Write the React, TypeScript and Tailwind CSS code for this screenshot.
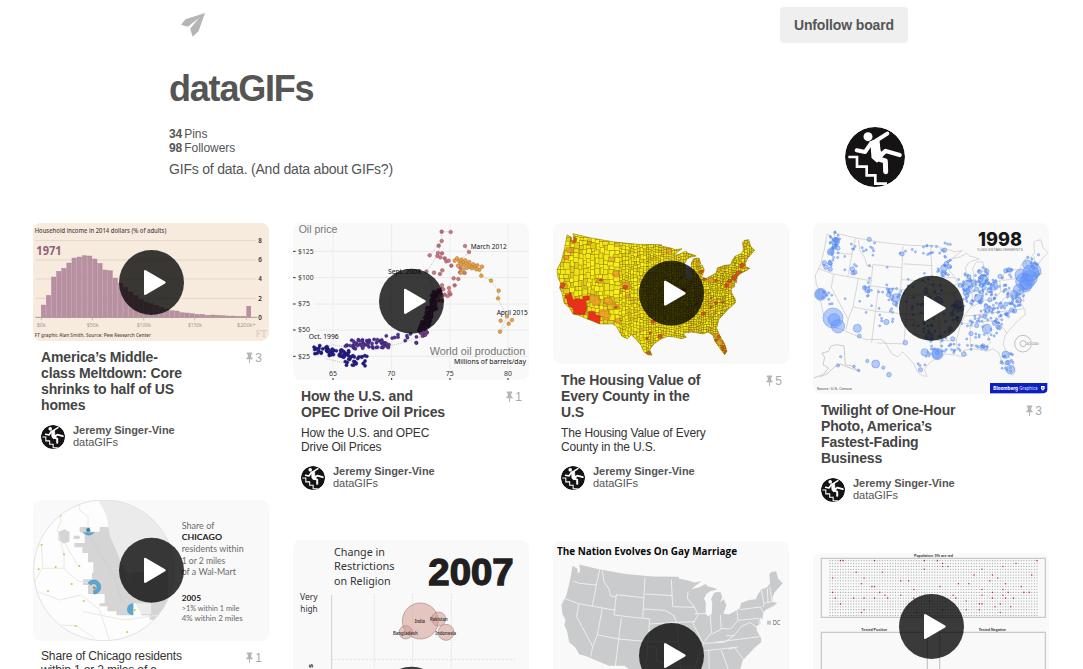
import React from "react";

const SANS = "'Liberation Sans', Arial, sans-serif";
const NOTO = "'Noto Sans', sans-serif";
const LATO = "Lato, sans-serif";

function makeRandom(seed: number) {
  let s = seed;
  return () => {
    s = (s * 1664525 + 1013904223) % 4294967296;
    return s / 4294967296;
  };
}

type LabelProps = {
  x: number;
  y: number;
  size: number;
  children: string;
  width?: number;
  weight?: number;
  fill?: string;
  font?: string;
};

function Label({ x, y, size, children, width, weight = 400, fill = "#333", font = NOTO }: LabelProps) {
  return (
    <text
      x={x}
      y={y}
      fontSize={size}
      fontWeight={weight}
      fill={fill}
      fontFamily={font}
      textLength={width}
      lengthAdjust="spacingAndGlyphs"
    >
      {children}
    </text>
  );
}

function Play({ cy }: { cy: number }) {
  return (
    <g transform={`translate(370.5 ${cy})`}>
      <circle r="97.5" fill="#000" fillOpacity="0.77" />
      <path d="M-19 -34 L39 0 L-19 34 Z" fill="#fff" stroke="#fff" strokeWidth="7" strokeLinejoin="round" />
    </g>
  );
}

function Picture({ height, top = 15, children }: { height: number; top?: number; children: React.ReactNode }) {
  return (
    <div className="w-[236px] overflow-hidden rounded-lg bg-[#f9f9f9]">
      <svg className="block" width="236" height={height} viewBox={`15 ${top} 708 ${height * 3}`}>
        {children}
      </svg>
    </div>
  );
}

function Avatar({ size }: { size: number }) {
  return (
    <svg className="block shrink-0 rounded-full" width={size} height={size} viewBox="0 0 180 180">
      <circle cx="90" cy="90" r="90" fill="#151314" />
      <g fill="none" stroke="#fff" strokeLinejoin="round" strokeLinecap="round">
        <path d="M10 90 H36 V119 H65 V145 H91 V170 H126" strokeWidth="8" strokeLinejoin="miter" strokeLinecap="butt" />
        <path d="M127 20 L92 42 L78 49 L60 75 L35 70" strokeWidth="12" />
        <path d="M95 95 L122 72 L164 84" strokeWidth="13" />
        <path d="M95 94 L121 102 L122 134" strokeWidth="15" />
      </g>
      <path d="M76 45 L101 39 L104 70 L113 86 L96 104 L82 92 L80 65 Z" fill="#fff" stroke="#fff" strokeWidth="5" strokeLinejoin="round" />
      <circle cx="69" cy="29" r="13.5" fill="#fff" />
    </svg>
  );
}

const USA =
  "M57 50 L70 58 L71 72 L77 64 L75 47 L130 60 L200 72 L270 79 L340 80 L343 85 L365 89 L382 95 L402 92 L386 104 L375 113 L396 108 L413 99 L420 106 L437 110 L445 114 L427 118 L416 125 L409 138 L414 150 L413 178 L420 186 L430 178 L431 150 L428 138 L437 122 L453 120 L458 135 L452 147 L462 140 L469 156 L461 178 L475 181 L490 173 L505 164 L508 150 L530 142 L548 140 L553 127 L562 114 L578 108 L586 98 L584 72 L590 67 L602 65 L608 85 L620 97 L610 108 L598 122 L592 136 L593 146 L605 151 L595 158 L575 168 L568 176 L565 195 L559 188 L560 206 L549 212 L551 225 L562 244 L562 255 L545 269 L530 285 L512 305 L506 330 L514 350 L530 378 L537 400 L530 410 L515 390 L500 368 L495 352 L480 342 L465 348 L450 345 L430 342 L405 346 L415 358 L400 362 L385 358 L360 355 L340 362 L318 378 L305 395 L312 412 L300 410 L288 402 L278 380 L265 365 L250 350 L238 362 L222 355 L205 325 L195 318 L155 318 L120 304 L92 292 L75 288 L65 270 L48 255 L42 225 L35 210 L38 195 L30 180 L27 155 L40 130 L50 90 Z";

const STATES =
  "M76 138 L95 145 L145 150 M155 105 L145 150 L133 214 M48 190 L92 206 L203 226 M163 108 L168 140 L182 160 L188 183 L205 186 M205 179 L287 188 M205 179 L198 240 L282 250 M291 127 L284 250 L305 252 L304 268 M292 177 L374 182 M287 222 L350 226 L376 240 L386 262 L304 267 M370 133 L374 215 L440 217 M163 220 L148 300 L134 335 M92 208 L86 245 L134 335 L128 365 M150 300 L212 312 L300 320 L390 320 M220 248 L201 402 M304 268 L300 320 L293 405 L216 402 M386 262 L440 260 M420 170 L418 190 L440 217 L450 240 L435 265 L457 310 L467 325 L455 350 L443 395 L445 425 M386 262 L392 320 L397 395 L440 396 M300 335 L325 337 L325 377 L360 388 L397 395 L400 430 M440 236 L475 236 M487 238 L490 292 L470 320 M517 240 L520 282 L490 298 M567 225 L570 256 L548 282 L520 280 M570 256 L632 250 L636 285 L606 262 L580 275 L558 302 L535 302 M575 224 L637 216 L650 238 M500 322 L635 305 M467 325 L530 322 L558 302 M465 348 L570 336 M482 348 L484 415 M520 346 L540 400 L530 412 L484 407 M540 342 L560 338 L588 375 M640 165 L648 206 L645 216 M658 160 L660 203 M665 156 L672 198 M648 205 L680 198";

function IncomeChart() {
  const bars = [37, 66, 121, 138, 147, 163, 178, 181, 185, 184, 175, 162, 142, 140, 118, 103, 90, 76, 65, 53, 46, 41, 36, 29, 25, 20, 19, 14, 13, 11, 9, 9, 6, 7, 6, 5, 4, 4, 3, 3];
  return (
    <Picture height={118}>
      <rect x="15" y="15" width="708" height="354" fill="#f7ebdd" />
      {[68, 126, 183, 241].map((y) => (
        <path key={y} d={`M22 ${y} H684`} stroke="#e3d7cd" strokeWidth="3" />
      ))}
      {bars.map((h, i) => (
        <rect key={i} x={39.5 + i * 15.4} y={298 - h} width="13.5" height={h} fill="#b98fa2" stroke="#a47a90" strokeWidth="1" />
      ))}
      <rect x="655" y="264" width="14" height="34" fill="#b98fa2" />
      <path d="M22 298 H688" stroke="#a99b96" strokeWidth="3" />
      {[40, 193, 347, 500, 655].map((x) => (
        <path key={x} d={`M${x} 299 v8`} stroke="#b9aaa3" strokeWidth="2" />
      ))}
      <Label x={20} y={44} size={19} width={395} weight={500} fill="#4c4644">Household income in 2014 dollars (% of adults)</Label>
      <Label x={25} y={111} size={38} width={76} weight={700} fill="#925f80">1971</Label>
      {["8", "6", "4", "2", "0"].map((t, i) => (
        <Label key={t} x={691} y={75 + i * 57.5} size={19} weight={600}>{t}</Label>
      ))}
      <Label x={26} y={326} size={17} width={28} fill="#a19793">$0k</Label>
      <Label x={176} y={326} size={17} width={36} fill="#a19793">$50k</Label>
      <Label x={326} y={326} size={17} width={43} fill="#a19793">$100k</Label>
      <Label x={480} y={326} size={17} width={42} fill="#a19793">$150k</Label>
      <Label x={627} y={326} size={17} width={56} fill="#a19793">$200k+</Label>
      <Label x={20} y={357} size={16} width={349} weight={500} fill="#4c4644">FT graphic Alan Smith, Source: Pew Research Center</Label>
      <Label x={683} y={358} size={29} width={34} fill="#d4c8bd" font="'Liberation Serif', serif">FT</Label>
      <Play cy={193.5} />
    </Picture>
  );
}

const OIL_LATE: [number, number][] = [
  [461, 41], [488, 42], [461, 69], [452, 83], [425, 112], [450, 105], [462, 106], [448, 114], [457, 118], [470, 121], [475, 130], [482, 128], [490, 143], [531, 84], [543, 102], [415, 161], [438, 164], [463, 157], [456, 168], [462, 202], [483, 210], [500, 202], [497, 181], [511, 183], [516, 163], [530, 165], [517, 150], [487, 229], [466, 214], [479, 234], [470, 230], [455, 234], [448, 243], [462, 248], [484, 222],
];
const OIL_GOLD: [number, number][] = [
  [500, 128], [507, 121], [514, 130], [520, 125], [526, 133], [532, 127], [538, 137], [544, 132], [550, 143], [556, 139], [562, 146], [568, 142], [574, 155], [582, 146], [565, 154], [552, 151], [543, 147], [536, 150], [528, 142], [518, 138], [510, 143], [525, 155], [519, 164], [580, 173], [609, 188], [632, 218], [630, 241], [657, 295], [638, 308], [636, 341], [662, 317], [672, 306],
];

function OilChart() {
  const r = makeRandom(27);
  const early: { x: number; y: number; c: string }[] = [];
  for (let i = 0; i < 20; i++) early.push({ x: 72 + r() * 62, y: 394 + r() * 16 - r() * 14 * (i % 3), c: "#171a82" });
  for (let i = 0; i < 34; i++) early.push({ x: 120 + r() * 75, y: 396 + r() * 22, c: "#1f1b86" });
  for (let i = 0; i < 24; i++) early.push({ x: 165 + r() * 80, y: 412 + r() * 36, c: "#211a88" });
  for (let i = 0; i < 56; i++) early.push({ x: 172 + r() * 132, y: 363 + r() * 30, c: i % 2 ? "#4b2a8b" : "#5c3691" });
  for (let i = 0; i < 14; i++) early.push({ x: 270 + r() * 120, y: 346 + r() * 30, c: "#54308c" });
  const middle: { x: number; y: number }[] = [];
  for (let i = 0; i < 110; i++) {
    const t = r();
    middle.push({ x: 388 + t * 50 + r() * 25, y: 345 - t * 125 + r() * 22 - 10 });
  }
  return (
    <Picture height={157}>
      {[100, 179, 258, 336, 415].map((y) => (
        <path key={y} d={`M80 ${y} H723`} stroke="#eaeaea" strokeWidth="3" />
      ))}
      {[135, 311, 486, 660].map((x) => (
        <g key={x}>
          <path d={`M${x} 15 V455`} stroke="#ededed" strokeWidth="3" />
          <path d={`M${x} 480 v6`} stroke="#222" strokeWidth="3" />
        </g>
      ))}
      <path d="M488 42 L461 41 L461 69 L448 114 L415 161 L465 280 M461 69 L425 112 M531 84 L543 102 L514 130 M574 155 L580 173 L609 188 L632 218 L630 241 L657 295 L636 341 L672 306 M72 400 L135 380 L180 390 M112 422 L170 435 L230 420 M260 395 L340 375 L415 352" fill="none" stroke="#aaa" strokeWidth="2" strokeDasharray="3 3" />
      {early.map((p, i) => (
        <circle key={i} cx={p.x} cy={p.y} r="5" fill={p.c} stroke="#281f62" strokeWidth="1" />
      ))}
      {middle.map((p, i) => (
        <circle key={i} cx={p.x} cy={p.y} r="5" fill="#7a3f86" stroke="#4c2856" strokeWidth="1.5" />
      ))}
      {OIL_LATE.map(([x, y], i) => (
        <circle key={i} cx={x} cy={y} r="5.5" fill={i % 3 ? "#c77b7f" : "#b66b84"} stroke="#94545e" strokeWidth="1.5" />
      ))}
      {OIL_GOLD.map(([x, y], i) => (
        <circle key={i} cx={x} cy={y} r="5.5" fill="#e5a347" stroke="#aa702f" strokeWidth="1.5" />
      ))}
      {[100, 179, 258, 336, 415].map((y, i) => (
        <g key={y}>
          <path d={`M15 ${y} h8`} stroke="#333" strokeWidth="3" />
          <Label x={30} y={y + 7} size={19} width={i < 2 ? 47 : 36}>{["$125", "$100", "$75", "$50", "$25"][i]}</Label>
        </g>
      ))}
      {["65", "70", "75", "80"].map((t, i) => (
        <Label key={t} x={123 + i * 175} y={473} size={19} width={24}>{t}</Label>
      ))}
      <Label x={32} y={46} size={34} width={116} fill="#777" font={SANS}>Oil price</Label>
      <Label x={548} y={92} size={19} width={108} fill="#111">March 2012</Label>
      <Label x={300} y={167} size={19} width={99} fill="#111">Sept. 2008</Label>
      <Label x={62} y={363} size={19} width={90} fill="#111">Oct. 1996</Label>
      <Label x={626} y={290} size={19} width={93} fill="#111">April 2015</Label>
      <Label x={425} y={410} size={34} width={287} fill="#777" font={SANS}>World oil production</Label>
      <Label x={498} y={438} size={20} width={216} fill="#111">Millions of barrels/day</Label>
      <Play cy={250} />
    </Picture>
  );
}

const ORANGE_AREAS: [number, number, number][] = [
  [64, 98, 9], [57, 120, 7], [125, 76, 6], [50, 205, 10], [155, 190, 8], [205, 170, 10], [235, 205, 12], [140, 250, 17], [170, 292, 17], [240, 235, 7], [205, 268, 9], [364, 100, 8], [452, 140, 8], [512, 155, 8], [590, 145, 9], [545, 200, 10], [490, 188, 8], [430, 342, 6], [510, 355, 9], [515, 375, 9], [210, 310, 8], [182, 252, 13],
];
const RED_AREAS: [number, number, number][] = [
  [78, 67, 9], [43, 203, 9], [58, 236, 7], [316, 312, 6], [337, 356, 7], [298, 361, 4], [308, 345, 4], [233, 208, 7], [159, 186, 4], [460, 162, 6], [470, 185, 5], [583, 143, 7], [572, 167, 9], [560, 180, 8], [545, 190, 6], [537, 203, 6], [467, 287, 6], [525, 253, 4], [505, 256, 5], [490, 268, 4], [529, 388, 8], [503, 368, 5], [514, 355, 5], [535, 402, 6], [410, 215, 5], [445, 260, 4], [302, 406, 6], [505, 188, 4], [205, 268, 4], [490, 240, 3], [400, 180, 4],
];

function HousingMap() {
  const r = makeRandom(91);
  const cells: { x: number; y: number; w: number; h: number; c: string }[] = [];
  const shades = ["#f5e716", "#f7e915", "#efe018", "#fbf01a", "#e3cb1c", "#ebb428"];
  let x = 24;
  while (x < 625) {
    const base = x < 215 ? 14 : x < 290 ? 9 : 7;
    const w = base * (0.75 + r() * 0.5);
    let y = 42;
    while (y < 415) {
      const h = base * (0.65 + r() * 0.8);
      cells.push({ x: x + (r() - 0.5) * base * 0.5, y, w: w * (0.9 + r() * 0.35), h, c: shades[Math.floor(r() * (x < 400 ? 5.3 : 6))] });
      y += h;
    }
    x += w;
  }
  return (
    <Picture height={141}>
      <defs>
        <clipPath id="housing-clip"><path d={USA} /></clipPath>
      </defs>
      <g clipPath="url(#housing-clip)">
        <rect x="15" y="15" width="640" height="410" fill="#dfce18" />
        {cells.map((c, i) => (
          <rect key={i} x={c.x} y={c.y} width={c.w} height={c.h} fill={c.c} stroke="#6b6208" strokeWidth={c.x < 215 ? 0.9 : c.x < 400 ? 0.85 : 1} />
        ))}
        {ORANGE_AREAS.map(([cx, cy, s], i) => (
          <path key={i} d={`M${cx - s} ${cy - s} h${s * 1.7} v${s * 0.7} h${s * 0.4} l-4 ${s} h${-s * 1.3} v${-s * 0.5} h${-s * 0.6} Z`} fill="#eb9829" stroke="#81540f" strokeWidth="1" fillOpacity="0.8" />
        ))}
        {RED_AREAS.map(([cx, cy, s], i) => (
          <path key={i} d={`M${cx - s} ${cy - s * 0.7} l${s} ${-s * 0.3} l${s} ${s * 0.4} l-2 ${s} l${-s * 0.8} ${s * 0.5} l${-s} ${-s * 0.4} Z`} fill="#d9411e" stroke="#7a2a0c" strokeWidth="1" fillOpacity="0.85" />
        ))}
        <path d="M55 236 L68 222 L76 246 L86 241 L105 245 L104 235 L123 234 L124 245 L113 249 L117 271 L110 290 L75 290 L77 274 L60 262 Z" fill="#e8301a" stroke="#8c3410" />
        <path d="M122 280 L139 280 L143 290 L157 294 L155 319 L120 304 Z" fill="#e8301a" stroke="#8c3410" />
      </g>
      <path d={USA} fill="none" stroke="#85761a" strokeWidth="1.5" />
      <path d="M418 124 L432 119 L428 140 L431 178 L421 185 L414 177 L415 148 Z" fill="#f9f9f9" />
      <path d="M417 148 L429 146 L431 178 L421 185 L414 177 Z" fill="#b9bdd8" />
      <Play cy={225.5} />
    </Picture>
  );
}

const PHOTO_CLUSTERS: [number, number, number, number, number][] = [
  [82, 70, 18, 30, 24], [70, 105, 25, 25, 10], [55, 140, 20, 18, 8], [135, 85, 10, 12, 4], [175, 85, 30, 22, 8], [130, 155, 20, 22, 5], [180, 205, 12, 30, 10], [260, 235, 22, 30, 17], [225, 215, 20, 20, 6], [410, 110, 45, 35, 18], [408, 155, 25, 18, 14], [475, 195, 30, 35, 26], [525, 180, 25, 32, 26], [560, 208, 45, 25, 26], [510, 235, 50, 30, 26], [485, 280, 60, 40, 24], [550, 285, 55, 40, 26], [530, 330, 55, 40, 30], [590, 265, 50, 35, 26], [620, 240, 30, 25, 22], [600, 170, 25, 18, 9], [390, 320, 50, 50, 26], [375, 395, 40, 25, 12], [445, 385, 55, 30, 18], [595, 430, 24, 35, 18], [60, 250, 25, 35, 9], [240, 295, 22, 30, 7], [345, 440, 20, 30, 4], [355, 95, 30, 20, 6], [350, 220, 55, 45, 14], [300, 110, 25, 25, 4], [510, 390, 30, 10, 9],
];
const PHOTO_BIG: [number, number, number][] = [
  [75, 300, 30], [78, 305, 18], [90, 325, 20], [38, 229, 15], [38, 229, 18], [148, 331, 12], [83, 70, 12], [68, 102, 10], [387, 408, 14], [388, 408, 17], [364, 355, 12], [350, 403, 11], [203, 438, 12], [178, 429, 5], [226, 449, 5], [243, 470, 7], [264, 239, 12], [178, 216, 8], [154, 354, 6], [133, 153, 7], [408, 150, 10], [478, 203, 16], [450, 260, 12], [525, 185, 14], [558, 205, 12], [593, 410, 11], [607, 455, 13], [235, 312, 8], [292, 374, 7], [467, 408, 7], [648, 190, 25], [665, 180, 23], [681, 158, 18], [653, 204, 18], [619, 231, 13], [640, 172, 19], [658, 140, 14], [668, 165, 24], [657, 192, 22], [632, 215, 16], [390, 250, 14], [537, 333, 14], [510, 240, 11],
];

function PhotoMap() {
  const r = makeRandom(13);
  const dots: { x: number; y: number; s: number }[] = [];
  PHOTO_CLUSTERS.forEach(([cx, cy, rx, ry, n]) => {
    for (let i = 0; i < n; i++) {
      const a = r() * Math.PI * 2;
      const d = Math.sqrt(r());
      dots.push({ x: cx + Math.cos(a) * d * rx, y: cy + Math.sin(a) * d * ry, s: r() > 0.85 ? 6.5 : 3.2 });
    }
  });
  for (let i = 0; i < 28; i++) dots.push({ x: 105 + r() * 250, y: 100 + r() * 230, s: 3 });
  for (let i = 0; i < 16; i++) dots.push({ x: 658 + r() * 40, y: 110 + r() * 70, s: 3.5 });
  return (
    <Picture height={171}>
      <path d={USA} transform="translate(-10 -11) scale(1.177 1.18)" fill="none" stroke="#c5c2c0" strokeWidth="1.6" />
      <path d={STATES} transform="translate(-20.5 -49) scale(1.051 1.0536)" fill="none" stroke="#c5c2c0" strokeWidth="1.8" />
      <path d="M18 480 L45 470 L62 450 L45 440 L50 418 L42 405 L62 400 L68 385 L85 380 L108 384 L112 440 L130 444 L155 460 L120 448 L98 438 L78 448 L60 465 L35 478" fill="none" stroke="#bdbab8" strokeWidth="2.2" />
      <g fill="#5f93fa" fillOpacity="0.45" stroke="#5585e8" strokeWidth="1.4">
        {dots.map((d, i) => (
          <circle key={i} cx={d.x} cy={d.y} r={d.s} />
        ))}
        {PHOTO_BIG.map(([x, y, s], i) => (
          <circle key={i} cx={x} cy={y} r={s} />
        ))}
        <circle cx="98" cy="416" r="3.5" />
        <circle cx="90" cy="442" r="5" />
        <circle cx="138" cy="445" r="4" />
        <circle cx="152" cy="457" r="4" />
      </g>
      <circle cx="645" cy="377" r="25" fill="none" stroke="#b5b5b5" strokeWidth="2.5" />
      <circle cx="645" cy="377" r="9" fill="none" stroke="#b5b5b5" strokeWidth="2.5" />
      <Label x={654} y={382} size={13} width={38} fill="#777" font={SANS}>10 100</Label>
      <Label x={510} y={83} size={58} width={132} weight={800} fill="#171717" font="Inter, sans-serif">1998</Label>
      <Label x={508} y={98} size={12} width={137} fill="#777" font={SANS}>9,066 ESTABLISHMENTS</Label>
      <Label x={26} y={516} size={12} width={106} fill="#444" font={SANS}>Source: U.S. Census</Label>
      <rect x="546" y="495" width="172" height="31" fill="#0d20be" />
      <Label x={556} y={516} size={16} width={74} weight={700} fill="#fff" font="Inter, sans-serif">Bloomberg</Label>
      <Label x={634} y={516} size={16} width={55} fill="#dfe2ff" font="Inter, sans-serif">Graphics</Label>
      <path d="M699 504 h11 v8 l-5.5 6 l-5.5 -6 Z" fill="#fff" />
      <path d="M704.5 508 v4" stroke="#0d20be" strokeWidth="3" />
      <Play cy={271} />
    </Picture>
  );
}

const STORES: [number, number][] = [
  [98, 62], [41, 149], [108, 178], [32, 223], [83, 216], [154, 213], [131, 267], [60, 289], [167, 318], [143, 393], [298, 411], [320, 345],
];

function ChicagoMap() {
  return (
    <Picture height={141}>
      <defs>
        <clipPath id="chicago-clip"><circle cx="228" cy="226" r="211" /></clipPath>
      </defs>
      <g clipPath="url(#chicago-clip)">
        <rect x="15" y="15" width="430" height="425" fill="#fdfdfd" />
        <path d="M209 15 L224 38 L235 62 L241 95 L247 125 L265 165 L280 205 L300 240 L320 320 L340 357 L385 365 L365 400 L440 400 V15 Z" fill="#ebebeb" />
        <path d="M92 110 L110 103 L125 111 L124 140 L108 146 L91 136 Z" fill="#d5d5d5" />
        <path d="M155 96 L186 96 L186 110 L215 110 L215 96 L241 96 L247 125 L265 165 L280 205 L300 240 L318 295 L318 361 L265 361 L265 349 L238 349 L238 334 L215 334 L215 325 L230 325 L230 297 L180 297 L180 270 L165 270 L165 253 L192 253 L192 233 L196 233 L196 202 L180 202 L180 174 L163 174 L163 157 L139 157 L139 144 L170 144 L170 118 L155 110 Z M137 122 H155 V132 H137 Z M339 357 H370 V325 H420 L400 391 H376 V374 H365 V361 H339 Z" fill="#d5d5d5" />
        <path d="M300 235 L318 295 L318 325 H370 V357 L420 340 V220 Z" fill="#d5d5d5" />
        <path d="M20 130 L40 155 L45 215 L20 260 M43 220 L105 220 L150 258 L190 265 M30 290 L95 315 L160 300 L215 345 L245 437 M60 15 L100 75 L88 105 L108 178 L108 222 M155 15 V45 L180 65 V100 M165 350 L290 375 L430 355 M90 390 L145 392 L200 430 M110 145 L152 215" fill="none" stroke="#e8e8e8" strokeWidth="3" />
        <path d="M178 115 L260 245 L282 320" stroke="#cbcbcb" fill="none" strokeWidth="2" />
        <path d="M165 112 L200 112 A20 18 0 0 1 165 112 Z" fill="#58a6d3" />
        <path d="M174 101 L184 98 L188 109 L177 111 Z" fill="#427d96" />
        <path d="M180 264 A21 21 0 1 1 197 297 V286 A10 10 0 1 0 189 270 Z" fill="#58a6d3" stroke="#4189b4" strokeWidth="1.5" />
        <circle cx="199" cy="278" r="4.5" fill="#9b9353" />
        <path d="M315 325 V361 A18 18 0 0 1 315 325 Z" fill="#58a6d3" />
        {STORES.map(([x, y], i) => (
          <circle key={i} cx={x} cy={y} r="3" fill="#dfbd42" />
        ))}
      </g>
      <circle cx="228" cy="226" r="211" fill="none" stroke="#e2e2e2" strokeWidth="3" />
      <Label x={461} y={101} size={26} width={98} fill="#6b6b6b" font={LATO}>Share of</Label>
      <Label x={461} y={136} size={24} width={121} weight={700} fill="#222" font={LATO}>CHICAGO</Label>
      <Label x={461} y={171} size={26} width={186} fill="#6b6b6b" font={LATO}>residents within</Label>
      <Label x={461} y={206} size={26} width={131} fill="#6b6b6b" font={LATO}>1 or 2 miles</Label>
      <Label x={461} y={241} size={26} width={163} fill="#6b6b6b" font={LATO}>of a Wal-Mart</Label>
      <Label x={461} y={318} size={20} width={58} weight={700} fill="#222" font={LATO}>2005</Label>
      <Label x={461} y={348} size={21} width={173} fill="#666" font={LATO}>&gt;1% within 1 mile</Label>
      <Label x={461} y={378} size={21} width={183} fill="#666" font={LATO}>4% within 2 miles</Label>
      <Play cy={226} />
    </Picture>
  );
}

function ReligionChart() {
  return (
    <Picture height={190}>
      <path d="M131 180 V585" stroke="#cfcfcf" strokeWidth="3" />
      <path d="M259 178 V585 M374 178 V585 M490 178 V585 M133 373 H685" stroke="#d5d5d5" strokeWidth="3" strokeDasharray="3 5" />
      <g stroke="#a58b87" strokeWidth="2" fill="#d69b91" fillOpacity="0.55">
        <circle cx="397" cy="258" r="54" />
        <circle cx="452" cy="252" r="21" />
        <circle cx="353" cy="292" r="20" />
        <circle cx="474" cy="292" r="24" />
      </g>
      <Label x={138} y={62} size={34} width={153} fill="#333">Change in</Label>
      <Label x={138} y={106} size={34} width={182} fill="#333">Restrictions</Label>
      <Label x={138} y={149} size={34} width={170} fill="#333">on Religion</Label>
      <text x="421" y="150" fontFamily={SANS} fontSize="112" fontWeight="700" fill="#231f20" stroke="#231f20" strokeWidth="4" textLength="256" lengthAdjust="spacingAndGlyphs">2007</text>
      <Label x={36} y={195} size={26} width={53}>Very</Label>
      <Label x={37} y={230} size={26} width={52}>high</Label>
      <Label x={380} y={265} size={15} width={31} weight={600}>India</Label>
      <Label x={426} y={258} size={15} width={53} weight={600}>Pakistan</Label>
      <Label x={315} y={299} size={15} width={74} weight={600}>Bangladesh</Label>
      <Label x={442} y={299} size={15} width={62} weight={600}>Indonesia</Label>
      <text transform="translate(74 399) rotate(-90)" fontFamily={SANS} fontSize="22" fontWeight="700" fill="#222">s</text>
      <Play cy={492.5} />
    </Picture>
  );
}

function MarriageMap() {
  return (
    <Picture height={160} top={18}>
      <path d={USA} transform="translate(10 36) scale(1.12)" fill="#cacbcc" />
      <path d={STATES} fill="none" stroke="#f3f3f3" strokeWidth="2.6" />
      <Label x={27} y={59} size={30} width={540} weight={700} fill="#080808" font="'Open Sans', sans-serif">The Nation Evolves On Gay Marriage</Label>
      <rect x="657" y="257" width="12" height="12" fill="#c7c8c9" />
      <Label x={674} y={269} size={19} width={23} fill="#555" font="'Open Sans', sans-serif">DC</Label>
      <Play cy={361.5} />
    </Picture>
  );
}

function PopulationChart() {
  const r = makeRandom(46);
  const dots: { x: number; y: number; c: string }[] = [];
  for (let row = 0; row < 20; row++) {
    for (let col = 0; col < 80; col++) {
      dots.push({ x: 66 + col * 7.86, y: 47 + row * 8.65, c: r() < 0.045 ? "#bb2846" : "#a3aaa6" });
    }
  }
  return (
    <Picture height={160} top={24}>
      <g fill="none" stroke="#c5c5c5" strokeWidth="3.5">
        <rect x="40" y="40" width="672" height="177" />
        <rect x="40" y="262" width="318" height="280" />
        <rect x="395" y="262" width="317" height="280" />
      </g>
      {dots.map((d, i) => (
        <circle key={i} cx={d.x} cy={d.y} r={d.c === "#bb2846" ? 2.4 : 1.8} fill={d.c} />
      ))}
      <Label x={318} y={36} size={12} width={117} weight={700} font={SANS}>Population: 5% are red</Label>
      <Label x={160} y={257} size={12} width={78} weight={700} font={SANS}>Tested Positive</Label>
      <Label x={512} y={257} size={12} width={82} weight={700} font={SANS}>Tested Negative</Label>
      <Play cy={244.5} />
    </Picture>
  );
}

type PinProps = {
  picture: React.ReactNode;
  title?: string[];
  description?: string[];
  count?: number;
};

function Pin({ picture, title, description, count }: PinProps) {
  return (
    <article className="w-[236px]">
      {picture}
      <div className="flex justify-between pt-2 pr-[7px] pl-2">
        <div className="whitespace-nowrap">
          {title && (
            <h2 className="text-[14px] leading-4 font-bold tracking-[-0.15px] text-[#444]">
              {title.map((line) => (
                <span key={line} className="block">{line}</span>
              ))}
            </h2>
          )}
          {description && (
            <p className={`text-[12px] leading-[14px] tracking-[-0.15px] text-[#333] ${title ? "mt-1.5" : ""}`}>
              {description.map((line) => (
                <span key={line} className="block">{line}</span>
              ))}
            </p>
          )}
        </div>
        {count !== undefined && (
          <div className="flex h-[18px] items-center gap-0.5 text-[12px] text-[#a8a8a8]">
            <svg width="7" height="12" viewBox="0 0 7 12" fill="#b5b5b5">
              <path d="M0.8 0.6 H6.2 V1.9 L5.2 2.6 V5 L6.8 6.5 V7.3 H4 V10.5 L3.5 11.6 L3 10.5 V7.3 H0.2 V6.5 L1.8 5 V2.6 L0.8 1.9 Z" />
            </svg>
            <span>{count}</span>
          </div>
        )}
      </div>
      <div className="flex items-start gap-2 px-2 pt-3">
        <Avatar size={24} />
        <div className="-mt-px text-[11px] leading-3 tracking-[-0.05px] text-[#555]">
          <div className="font-bold">Jeremy Singer-Vine</div>
          <div>dataGIFs</div>
        </div>
      </div>
    </article>
  );
}

export default function App() {
  return (
    <div className="h-[669px] w-[1083px] overflow-hidden bg-white font-['Liberation_Sans',Arial,sans-serif] text-[#555]">
      <header className="mr-[175px] ml-[169px] flex h-[223px] flex-col">
        <div className="flex items-start justify-between pt-[7px] pl-3">
          <svg className="mt-[6px]" width="24" height="24" viewBox="0 0 24 24" fill="#b5b5b5">
            <path d="M24 0 L4.5 6.2 L0 11.8 L6.8 13.8 L18 5 L9.2 15.8 L11.6 23.8 L17.5 18.2 Z" />
          </svg>
          <button className="h-9 rounded bg-[#efefef] px-3.5 text-[14px] font-bold tracking-[-0.13px] whitespace-nowrap text-[#555]">
            Unfollow board
          </button>
        </div>
        <h1 className="mt-6 text-[36px] leading-[44px] font-bold tracking-[-1.2px]">dataGIFs</h1>
        <div className="mt-4 flex items-start justify-between pr-[3px]">
          <div>
            <div className="flex gap-0.5 text-[12px] leading-[14px] tracking-[-0.05px]"><b>34</b><span>Pins</span></div>
            <div className="flex gap-0.5 text-[12px] leading-[14px] tracking-[-0.05px]"><b>98</b><span>Followers</span></div>
            <p className="mt-[5px] text-[14px] leading-[18px] tracking-[-0.2px]">GIFs of data. (And data about GIFs?)</p>
          </div>
          <Avatar size={60} />
        </div>
      </header>
      <main className="flex items-start gap-6 pl-[33px]">
        <div className="flex flex-col gap-[51px]">
          <Pin picture={<IncomeChart />} title={["America’s Middle-", "class Meltdown: Core", "shrinks to half of US", "homes"]} count={3} />
          <Pin picture={<ChicagoMap />} description={["Share of Chicago residents", "within 1 or 2 miles of a"]} count={1} />
        </div>
        <div className="flex flex-col gap-[50px]">
          <Pin picture={<OilChart />} title={["How the U.S. and", "OPEC Drive Oil Prices"]} description={["How the U.S. and OPEC", "Drive Oil Prices"]} count={1} />
          <Pin picture={<ReligionChart />} />
        </div>
        <div className="flex flex-col gap-[51px]">
          <Pin picture={<HousingMap />} title={["The Housing Value of", "Every County in the", "U.S"]} description={["The Housing Value of Every", "County in the U.S."]} count={5} />
          <Pin picture={<MarriageMap />} />
        </div>
        <div className="flex flex-col gap-[51px]">
          <Pin picture={<PhotoMap />} title={["Twilight of One-Hour", "Photo, America’s", "Fastest-Fading", "Business"]} count={3} />
          <Pin picture={<PopulationChart />} />
        </div>
      </main>
    </div>
  );
}
